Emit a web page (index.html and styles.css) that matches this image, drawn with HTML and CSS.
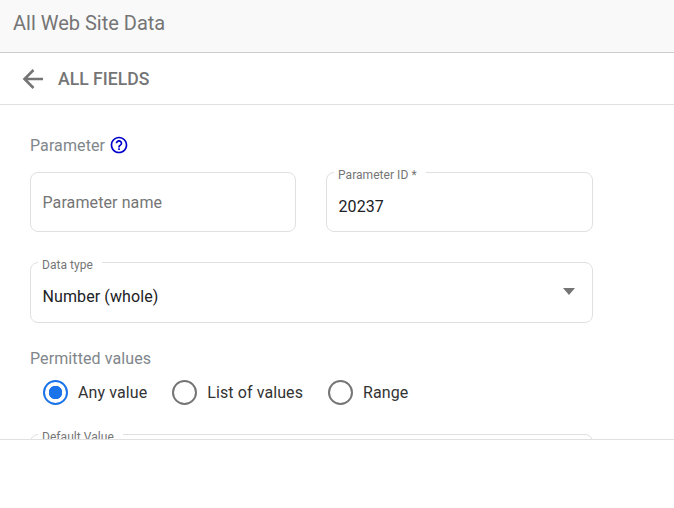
FILE: index.html
```html
<!DOCTYPE html>
<html lang="en">
<head>
<meta charset="UTF-8">
<title>All Web Site Data</title>
<link rel="stylesheet" href="styles.css">
</head>
<body>
<header class="view-bar">All Web Site Data</header>
<div class="back-bar">
  <svg class="back-icon" width="24" height="24" viewBox="0 0 24 24"><path d="M22 12H4M12.5 3 3.5 12l9 9"/></svg>
  <span class="back-title">ALL FIELDS</span>
</div>
<main class="form-area">
  <div class="form-inner">
    <div class="section-label">Parameter
      <svg class="help-icon" width="20" height="20" viewBox="0 0 24 24"><path d="M11 18h2v-2h-2v2zm1-16C6.48 2 2 6.48 2 12s4.48 10 10 10 10-4.48 10-10S17.52 2 12 2zm0 18c-4.41 0-8-3.59-8-8s3.59-8 8-8 8 3.59 8 8-3.59 8-8 8zm0-14c-2.21 0-4 1.79-4 4h2c0-1.1.9-2 2-2s2 .9 2 2c0 2-3 1.75-3 5h2c0-2.25 3-2.5 3-5 0-2.21-1.79-4-4-4z"/></svg>
    </div>
    <div class="field-row">
      <div class="field field-name"><span class="placeholder">Parameter name</span></div>
      <div class="field">
        <label class="float-label">Parameter ID *</label>
        <span class="value">20237</span>
      </div>
    </div>
    <div class="field field-select">
      <label class="float-label">Data type</label>
      <span class="value">Number (whole)</span>
      <span class="caret"></span>
    </div>
    <div class="section-label permitted">Permitted values</div>
    <div class="radio-row">
      <div class="radio-item"><span class="radio checked"></span>Any value</div>
      <div class="radio-item"><span class="radio"></span>List of values</div>
      <div class="radio-item"><span class="radio"></span>Range</div>
    </div>
    <div class="field field-default">
      <label class="float-label">Default Value</label>
    </div>
  </div>
</main>
</body>
</html>
```

FILE: styles.css
```css
html, body {
  height: 100%;
}
body {
  margin: 0;
  background: #fff;
  font-family: Roboto, "Liberation Sans", sans-serif;
  color: #202124;
  overflow: hidden;
}
.view-bar {
  box-sizing: border-box;
  height: 53px;
  padding: 0 13px;
  line-height: 47px;
  font-size: 20px;
  color: #757575;
  background: #f9f9f9;
  border-bottom: 1px solid #ccc;
}
.back-bar {
  box-sizing: border-box;
  height: 52px;
  display: flex;
  align-items: center;
  padding: 0 21px;
  border-bottom: 1px solid #e0e0e0;
}
.back-icon {
  fill: none;
  stroke: #757575;
  stroke-width: 2.6;
  margin-right: 13px;
}
.back-title {
  font-size: 17.6px;
  font-weight: 500;
  color: #757575;
}
.form-area {
  box-sizing: border-box;
  height: 335px;
  overflow: hidden;
  border-bottom: 1px solid #e0e0e0;
}
.form-inner {
  box-sizing: border-box;
  width: 593px;
  padding: 30px 0 0 30px;
}
.section-label {
  display: flex;
  align-items: center;
  gap: 4px;
  height: 20px;
  font-size: 16px;
  letter-spacing: 0.1px;
  color: #80868b;
}
.help-icon {
  fill: #0000cd;
}
.field-row {
  display: flex;
  gap: 30px;
  margin-top: 17px;
}
.field {
  box-sizing: border-box;
  position: relative;
  flex: 1;
  min-width: 0;
  height: 60px;
  padding: 0 11.5px;
  border: 1px solid #e0e0e0;
  border-radius: 8px;
  font-size: 16px;
  letter-spacing: 0.1px;
}
.field-name {
  flex: 0 0 266px;
}
.float-label {
  position: absolute;
  left: 7px;
  top: -5px;
  padding: 0 9px 0 4px;
  font-size: 12px;
  line-height: 14px;
  letter-spacing: 0.05px;
  color: #757575;
  background: #fff;
}
.placeholder {
  display: block;
  margin-top: 20px;
  line-height: 20px;
  color: #757575;
}
.value {
  display: block;
  margin-top: 24px;
  line-height: 20px;
  color: #202124;
}
.field-select {
  height: 61px;
  margin-top: 30px;
}
.caret {
  position: absolute;
  right: 17px;
  top: 25px;
  border: 6px solid transparent;
  border-top: 7px solid #757575;
  border-bottom: 0;
}
.permitted {
  margin-top: 25px;
}
.radio-row {
  display: flex;
  gap: 25px;
  margin: 12px 0 0 13px;
  letter-spacing: 0.1px;
  color: #333;
}
.radio-item {
  display: flex;
  align-items: center;
  gap: 10px;
  height: 25px;
  font-size: 16px;
}
.radio {
  box-sizing: border-box;
  width: 25px;
  height: 25px;
  border: 2.5px solid #757575;
  border-radius: 50%;
}
.radio.checked {
  border-color: #1a73e8;
  background: radial-gradient(circle, #1a73e8 6.5px, transparent 7px);
}
.field-default {
  margin-top: 29px;
}
```
